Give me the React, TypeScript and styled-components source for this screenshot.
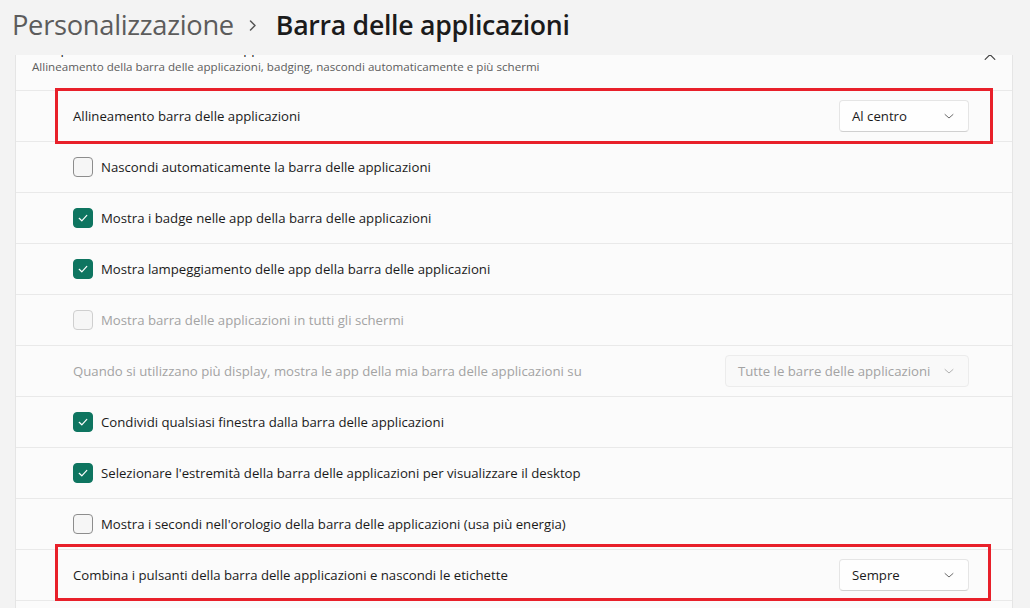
import React from 'react';
import styled, { createGlobalStyle } from 'styled-components';

const Global = createGlobalStyle`
  html, body { margin: 0; padding: 0; background: #f3f3f3; }
  body { font-family: "Open Sans", "Noto Sans", sans-serif; -webkit-font-smoothing: antialiased; }
  * { box-sizing: border-box; }
`;

const Page = styled.div`
  width: 1030px;
  height: 608px;
  display: flex;
  flex-direction: column;
  overflow: hidden;
  background: #f3f3f3;
`;

const Breadcrumb = styled.header`
  flex: none;
  height: 55px;
  display: flex;
  align-items: flex-start;
  padding: 6px 0 0 12px;
  line-height: 38px;
  letter-spacing: -0.3px;
`;

const Crumb = styled.span`
  color: #5c5c5c;
  font-weight: 400;
  font-size: 27.3px;
`;

const Sep = styled.span`
  display: flex;
  align-items: center;
  height: 38px;
  margin: 0 19px 0 14px;
`;

const Current = styled.span`
  color: #1b1b1b;
  font-weight: 600;
  font-size: 26.7px;
`;

const Viewport = styled.div`
  flex: 1;
  overflow: hidden;
  padding: 0 17px 0 15px;
`;

const Card = styled.section`
  margin-top: -33px;
  background: #fbfbfb;
  border: 1px solid #e5e5e5;
  border-radius: 4px;
`;

const CardHeader = styled.div`
  height: 67px;
  display: flex;
  align-items: center;
  justify-content: space-between;
  padding: 0 16px 0 16px;
`;

const HeaderText = styled.div`
  display: flex;
  flex-direction: column;
`;

const HeaderTitle = styled.div`
  font-size: 13.2px;
  line-height: 20px;
  color: #1a1a1a;
`;

const HeaderSub = styled.div`
  font-size: 11.6px;
  line-height: 16px;
  color: #5d5d5d;
`;

const Row = styled.div<{ $dim?: boolean }>`
  position: relative;
  height: 51px;
  border-top: 1px solid #e9e9e9;
  display: flex;
  align-items: center;
  justify-content: space-between;
  padding: 0 43px 0 57px;
  font-size: 13.2px;
  color: ${p => (p.$dim ? '#a3a3a3' : '#1a1a1a')};
`;

const CheckLabel = styled.label`
  display: flex;
  align-items: center;
  gap: 8px;
`;

const Box = styled.span<{ $on?: boolean; $dim?: boolean }>`
  width: 20px;
  height: 20px;
  border-radius: 4px;
  display: flex;
  align-items: center;
  justify-content: center;
  background: ${p => (p.$on ? '#0e7560' : '#f6f6f6')};
  border: 1px solid ${p => (p.$on ? '#0e7560' : p.$dim ? '#cfcfcf' : '#8d8d8d')};
`;

const Select = styled.div<{ $w: number; $dim?: boolean }>`
  width: ${p => p.$w}px;
  height: 32px;
  display: flex;
  align-items: center;
  justify-content: space-between;
  padding: 0 14px 0 12px;
  border-radius: 4px;
  background: ${p => (p.$dim ? '#f9f9f9' : '#fefefe')};
  border: 1px solid ${p => (p.$dim ? '#ececec' : '#e5e5e5')};
  border-bottom-color: ${p => (p.$dim ? '#ececec' : '#d0d0d0')};
  color: ${p => (p.$dim ? '#a3a3a3' : '#1a1a1a')};
  font-size: 13.2px;
  white-space: nowrap;
`;

const Highlight = styled.div<{ $top: number; $bottom: number; $right: number }>`
  position: absolute;
  left: 39px;
  right: ${p => p.$right}px;
  top: ${p => p.$top}px;
  bottom: ${p => p.$bottom}px;
  border: 3px solid #e8202a;
  pointer-events: none;
  z-index: 2;
`;

const Chevron = ({ up, color = '#5f5f5f', size = 10 }: { up?: boolean; color?: string; size?: number }) => (
  <svg width={size} height={size} viewBox="0 0 10 10">
    <path
      d={up ? 'M1 7 L5 3 L9 7' : 'M1 3.5 L5 7 L9 3.5'}
      fill="none"
      stroke={color}
      strokeWidth="1"
      strokeLinecap="round"
      strokeLinejoin="round"
    />
  </svg>
);

const Tick = () => (
  <svg width="12" height="12" viewBox="0 0 12 12">
    <path d="M2.2 6.3 L4.8 8.8 L9.8 3.4" fill="none" stroke="#ffffff" strokeWidth="1.2" strokeLinecap="round" strokeLinejoin="round" />
  </svg>
);

type Item =
  | { kind: 'check'; label: string; on?: boolean; dim?: boolean }
  | { kind: 'select'; label: string; value: string; w: number; dim?: boolean; mark?: { top: number; bottom: number; right: number } };

const items: Item[] = [
  { kind: 'select', label: 'Allineamento barra delle applicazioni', value: 'Al centro', w: 130, mark: { top: -3, bottom: -3, right: 19 } },
  { kind: 'check', label: 'Nascondi automaticamente la barra delle applicazioni' },
  { kind: 'check', label: 'Mostra i badge nelle app della barra delle applicazioni', on: true },
  { kind: 'check', label: 'Mostra lampeggiamento delle app della barra delle applicazioni', on: true },
  { kind: 'check', label: 'Mostra barra delle applicazioni in tutti gli schermi', dim: true },
  { kind: 'select', label: 'Quando si utilizzano più display, mostra le app della mia barra delle applicazioni su', value: 'Tutte le barre delle applicazioni', w: 244, dim: true },
  { kind: 'check', label: 'Condividi qualsiasi finestra dalla barra delle applicazioni', on: true },
  { kind: 'check', label: "Selezionare l'estremità della barra delle applicazioni per visualizzare il desktop", on: true },
  { kind: 'check', label: "Mostra i secondi nell'orologio della barra delle applicazioni (usa più energia)" },
  { kind: 'select', label: 'Combina i pulsanti della barra delle applicazioni e nascondi le etichette', value: 'Sempre', w: 130, mark: { top: -6, bottom: -1, right: 21 } },
  { kind: 'check', label: 'Combina i pulsanti e nascondi le etichette su altre barre delle applicazioni' },
];

export default function App() {
  return (
    <Page>
      <Global />
      <Breadcrumb>
        <Crumb>Personalizzazione</Crumb>
        <Sep>
          <svg width="9" height="13" viewBox="0 0 9 13">
            <path d="M2.5 2 L7 6.5 L2.5 11" fill="none" stroke="#555" strokeWidth="1.5" strokeLinecap="round" strokeLinejoin="round" />
          </svg>
        </Sep>
        <Current>Barra delle applicazioni</Current>
      </Breadcrumb>
      <Viewport>
        <Card>
          <CardHeader>
            <HeaderText>
              <HeaderTitle>Comportamenti della barra delle applicazioni</HeaderTitle>
              <HeaderSub>Allineamento della barra delle applicazioni, badging, nascondi automaticamente e più schermi</HeaderSub>
            </HeaderText>
            <Chevron up color="#444" size={12} />
          </CardHeader>
          {items.map((it, i) =>
            it.kind === 'check' ? (
              <Row key={i} $dim={it.dim}>
                <CheckLabel>
                  <Box $on={it.on} $dim={it.dim}>{it.on && <Tick />}</Box>
                  {it.label}
                </CheckLabel>
              </Row>
            ) : (
              <Row key={i} $dim={it.dim}>
                <span>{it.label}</span>
                <Select $w={it.w} $dim={it.dim}>
                  {it.value}
                  <Chevron color={it.dim ? '#b0b0b0' : '#6a6a6a'} />
                </Select>
                {it.mark && <Highlight $top={it.mark.top} $bottom={it.mark.bottom} $right={it.mark.right} />}
              </Row>
            )
          )}
        </Card>
      </Viewport>
    </Page>
  );
}
